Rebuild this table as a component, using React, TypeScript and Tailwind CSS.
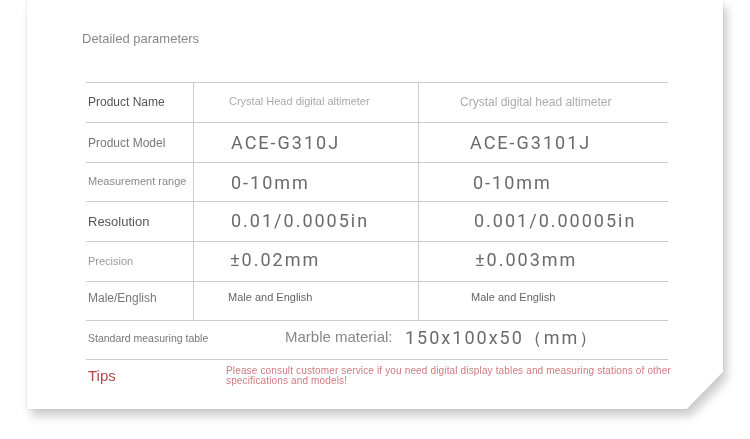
const labelBase = "font-['Liberation_Sans',Arial,sans-serif]";
const valueBase = "font-['Roboto','Liberation_Sans',sans-serif] text-[18px] text-[#6a6a6a] tracking-[2px]";

type Row = {
  label: string;
  labelClass: string;
  a: string;
  aClass: string;
  b: string;
  bClass: string;
  h: string;
};

const rows: Row[] = [
  {
    label: "Product Name",
    labelClass: "text-[12px] text-[#555] pb-[1px]",
    a: "Crystal Head digital altimeter",
    aClass: `${labelBase} text-[11px] text-[#aaa] pl-[35px] pb-[2px]`,
    b: "Crystal digital head altimeter",
    bClass: `${labelBase} text-[12px] text-[#aaa] pl-[41px] pb-[2px]`,
    h: "h-[40px]",
  },
  {
    label: "Product Model",
    labelClass: "text-[12px] text-[#777]",
    a: "ACE-G310J",
    aClass: `${valueBase} pl-[37px] tracking-[1.5px]`,
    b: "ACE-G3101J",
    bClass: `${valueBase} pl-[51px] tracking-[1.5px]`,
    h: "h-[40px]",
  },
  {
    label: "Measurement range",
    labelClass: "text-[11px] text-[#888] pb-[2px]",
    a: "0-10mm",
    aClass: `${valueBase} pl-[37px]`,
    b: "0-10mm",
    bClass: `${valueBase} pl-[54px]`,
    h: "h-[39px]",
  },
  {
    label: "Resolution",
    labelClass: "text-[13px] text-[#555]",
    a: "0.01/0.0005in",
    aClass: `${valueBase} pl-[37px] pb-[3px]`,
    b: "0.001/0.00005in",
    bClass: `${valueBase} pl-[55px] pb-[3px]`,
    h: "h-[40px]",
  },
  {
    label: "Precision",
    labelClass: "text-[11px] text-[#999]",
    a: "±0.02mm",
    aClass: `${valueBase} pl-[36px] pb-[4px]`,
    b: "±0.003mm",
    bClass: `${valueBase} pl-[56px] pb-[4px]`,
    h: "h-[40px]",
  },
  {
    label: "Male/English",
    labelClass: "text-[12px] text-[#777] pb-[6px]",
    a: "Male and English",
    aClass: `${labelBase} text-[11px] text-[#666] pl-[34px] pb-[7px]`,
    b: "Male and English",
    bClass: `${labelBase} text-[11px] text-[#666] pl-[52px] pb-[7px]`,
    h: "h-[39px]",
  },
];

export default function App() {
  return (
    <div className="w-[750px] h-[439px] bg-white overflow-hidden">
      <div className="ml-[27px] w-[696px] [filter:drop-shadow(0_0_1px_rgba(0,0,0,0.12))_drop-shadow(4px_7px_5px_rgba(0,0,0,0.2))]">
        <div className="h-[409px] bg-white pl-[55px] pt-[30px] [clip-path:polygon(0_0,100%_0,100%_calc(100%-37px),calc(100%-36px)_100%,0_100%)]">
          <h2 className={`${labelBase} text-[13px] text-[#888] leading-[18px]`}>
            Detailed parameters
          </h2>

          <div className="mt-[34px] ml-[4px] w-[582px]">
            {rows.map((r) => (
              <div
                key={r.label}
                className={`grid grid-cols-[108px_225px_249px] border-t border-[#cccccc] ${r.h}`}
              >
                <div className={`${labelBase} ${r.labelClass} flex items-center pl-[2px] border-r border-[#cccccc]`}>
                  {r.label}
                </div>
                <div className={`${r.aClass} flex items-center border-r border-[#cccccc]`}>
                  {r.a}
                </div>
                <div className={`${r.bClass} flex items-center`}>{r.b}</div>
              </div>
            ))}

            <div className="flex items-center h-[40px] border-t border-b border-[#cccccc] pb-[5px]">
              <div className={`${labelBase} text-[10.5px] text-[#777] pl-[2px] w-[199px] shrink-0 pt-[2px]`}>
                Standard measuring table
              </div>
              <div className={`${labelBase} text-[15px] text-[#888] w-[120px] shrink-0`}>
                Marble material:
              </div>
              <div className="font-['Roboto','Liberation_Sans',sans-serif] text-[18px] text-[#6a6a6a] tracking-[2px]">
                150x100x50（mm）
              </div>
            </div>

            <div className="flex items-start pt-[5px]">
              <div className={`${labelBase} text-[15px] text-[#b04848] pl-[2px] w-[140px] shrink-0 leading-[20px] pt-[1px]`}>
                Tips
              </div>
              <p className={`${labelBase} text-[10px] leading-[10px] text-[#d07a80] w-[462px] shrink-0 tracking-[0.15px] pt-[1px]`}>
                Please consult customer service if you need digital display tables and measuring stations of other
                specifications and models!
              </p>
            </div>
          </div>
        </div>
      </div>
    </div>
  );
}
